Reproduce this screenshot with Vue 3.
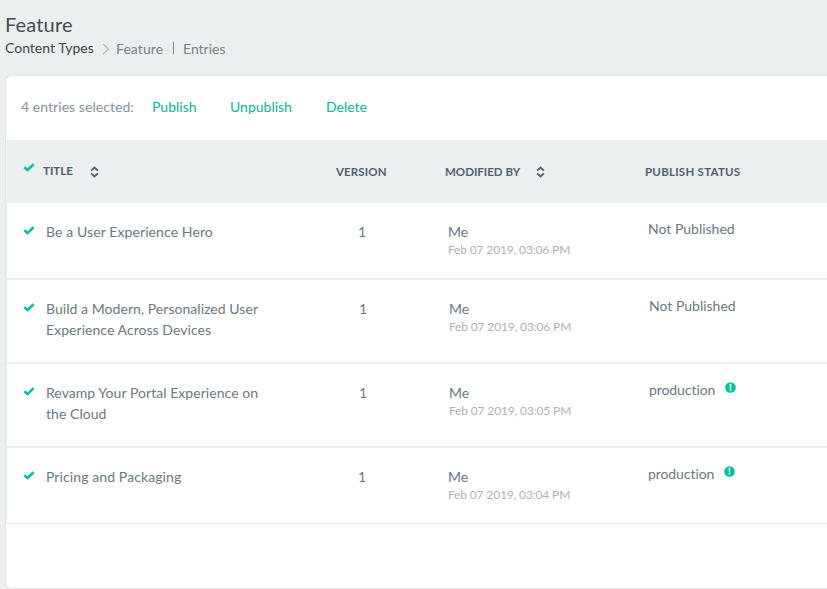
<script setup>
const actions = ['Publish', 'Unpublish', 'Delete']
const entries = [
  { title: ['Be a User Experience Hero'], version: 1, date: 'Feb 07 2019, 03:06 PM', status: 'Not Published', live: false },
  { title: ['Build a Modern, Personalized User', 'Experience Across Devices'], version: 1, date: 'Feb 07 2019, 03:06 PM', status: 'Not Published', live: false },
  { title: ['Revamp Your Portal Experience on', 'the Cloud'], version: 1, date: 'Feb 07 2019, 03:05 PM', status: 'production', live: true },
  { title: ['Pricing and Packaging'], version: 1, date: 'Feb 07 2019, 03:04 PM', status: 'production', live: true },
]
</script>

<template>
  <div class="page">
    <header class="head">
      <h1>Feature</h1>
      <nav class="crumbs">
        <a class="root">Content Types</a>
        <svg class="chevron" width="8" height="12" viewBox="0 0 8 12"><path d="M1 .8 6.6 6 1 11.2" /></svg>
        <span class="crumb feature">Feature</span>
        <i class="bar"></i>
        <span class="crumb entries">Entries</span>
      </nav>
    </header>
    <main class="card">
      <div class="toolbar">
        <span class="count">4 entries selected:</span>
        <a v-for="a in actions" :key="a" :class="['action', a.toLowerCase()]">{{ a }}</a>
      </div>
      <div class="grid thead">
        <svg class="check" width="12" height="9" viewBox="0 0 12 9"><path d="M1.4 4.3 4.5 7.1 10.6 1.3" /></svg>
        <div class="th title-th"><span class="t1">TITLE</span>
          <svg class="sort" width="9" height="12" viewBox="0 0 9 12"><path d="M1.1 4.7 4.5 1.5 7.9 4.7M1.1 7.3 4.5 10.5 7.9 7.3" /></svg>
        </div>
        <div class="th"><span class="t2">VERSION</span></div>
        <div class="th"><span class="t3">MODIFIED BY</span>
          <svg class="sort" width="9" height="12" viewBox="0 0 9 12"><path d="M1.1 4.7 4.5 1.5 7.9 4.7M1.1 7.3 4.5 10.5 7.9 7.3" /></svg>
        </div>
        <div class="th"><span class="t4">PUBLISH STATUS</span></div>
      </div>
      <div v-for="e in entries" :key="e.title[0]" :class="['grid', 'row', { tall: e.title.length > 1 }]">
        <svg class="check" width="12" height="9" viewBox="0 0 12 9"><path d="M1.4 4.3 4.5 7.1 10.6 1.3" /></svg>
        <div class="title"><div v-for="line in e.title" :key="line">{{ line }}</div></div>
        <div class="version">{{ e.version }}</div>
        <div class="modified"><div>Me</div><div class="date">{{ e.date }}</div></div>
        <div class="status">
          <span :class="{ env: e.live }">{{ e.status }}</span>
          <svg v-if="e.live" class="info" width="11" height="11" viewBox="0 0 11 11"><circle cx="5.5" cy="5.5" r="5.3" /><path d="M4.6 1.8h1.8l-.2 4.8H4.8zM4.7 7.3h1.6v1.5H4.7z" /></svg>
        </div>
      </div>
    </main>
  </div>
</template>

<style>
body { background: #ebeff0; overflow: hidden; }
</style>

<style scoped>
.page { box-sizing: border-box; height: 589px; padding: 12px 0 0 5px; background: #ebeff0; color: #6c7884; font: 14px/21px Lato, "Liberation Sans", sans-serif; white-space: nowrap; display: flex; flex-direction: column; }
.head { height: 63px; }
h1 { margin: 0; font-weight: 400; font-size: 20px; line-height: 24px; letter-spacing: .15px; color: #464b50; }
.crumbs { display: flex; height: 21px; padding-top: 1px; }
.root { width: 97px; color: #41464a; }
.chevron { margin-top: 6px; fill: none; stroke: #92989c; }
.crumb { padding-top: 1px; color: #7b8185; }
.feature { margin-left: 6px; width: 57px; letter-spacing: .08px; }
.bar { width: 1px; height: 12px; margin-top: 5px; background: #7a8084; }
.entries { margin-left: 9px; }
.card { box-sizing: border-box; height: 514px; border: 1px solid #e2e5e6; border-right: 0; border-radius: 7px 0 0 7px; background: #fff; overflow: hidden; }
.toolbar { box-sizing: border-box; display: flex; height: 64px; padding: 20px 0 0 15px; }
.count { width: 131px; color: #8793a0; letter-spacing: .05px; }
.action { color: #0cb49c; }
.publish { width: 78px; }
.unpublish { width: 96px; }
.grid { display: grid; grid-template-columns: 22px 291px 109px 200px 1fr; padding-left: 17px; }
.check { fill: none; stroke: #00bf9f; stroke-width: 2.6; }
.thead { height: 63px; background: #ebeff0; font-size: 11.5px; font-weight: 700; color: #526170; box-sizing: border-box; padding-top: 21px; }
.thead .check { margin-top: 2px; }
.th { display: flex; align-items: flex-start; }
.title-th { margin-left: -2px; }
.t1 { width: 47px; margin-top: -1px; }
.t2 { letter-spacing: .12px; }
.t3 { width: 91px; }
.t4 { letter-spacing: .25px; }
.sort { margin-top: 5px; fill: none; stroke: #526170; stroke-width: 1.8; }
.title-th .sort { margin-top: 5px; }
.row { box-sizing: border-box; height: 77px; padding: 18px 0 0 16px; border-left: 1px solid #ebeff0; border-bottom: 2px solid #ebeff0; }
.row.tall { height: 84px; grid-template-columns: 22px 292px 109px 200px 1fr; }
.row:last-child { height: 76px; border-bottom-width: 1px; }
.row .check { margin-top: 5px; }
.title { padding-left: 1px; letter-spacing: .1px; }
.tall .title { letter-spacing: .05px; }
.version { padding-left: 22px; }
.modified { padding-left: 3px; }
.date { font-size: 12px; line-height: 15px; letter-spacing: -.15px; color: #afb2b5; }
.status { display: flex; padding-left: 3px; margin-top: -3px; }
.env { width: 76px; letter-spacing: -.08px; }
.info { margin-top: 3px; fill: #00bf9f; }
.info path { fill: #fff; }
</style>
